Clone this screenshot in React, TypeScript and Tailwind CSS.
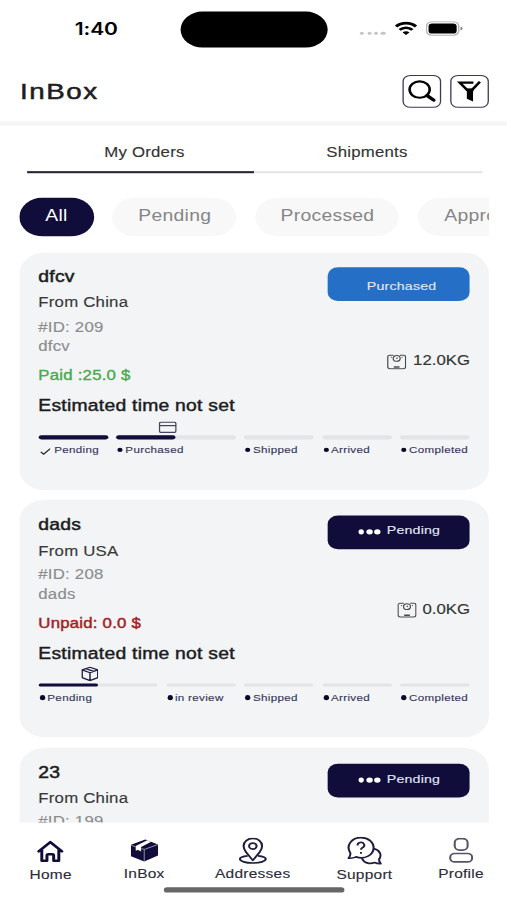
import React from "react";

const label = "whitespace-nowrap font-['Liberation_Sans',Arial,sans-serif]";

function StatusBar() {
  return (
    <div className="flex h-[56px] shrink-0 items-start">
      <div className="w-[139.5px] pt-[17.4px] pl-[58px] font-['Inter',sans-serif] text-[16.3px] leading-[20px] font-semibold tracking-[-0.1px] text-black">1:40</div>
      <div className="mt-[11px] h-[33.5px] w-[114.8px] rounded-full bg-black" />
      <div className="mt-[20px] ml-[25px] flex h-[14px] items-start">
        <div className="mt-[10px] flex gap-[2.2px]">
          {[0, 1, 2, 3].map((i) => (
            <span key={i} className="h-[3.4px] w-[3.2px] rounded-full bg-[#c4c4c4]" />
          ))}
        </div>
        <svg className="mt-[0.3px] ml-[7.8px] h-[13.5px] w-[17.5px]" viewBox="0 0 17.5 13.5" fill="none" stroke="#000" strokeWidth="2.5">
          <path d="M1 5.1A11 11 0 0 1 16.5 5.1" />
          <path d="M3.8 8.3A7 7 0 0 1 13.7 8.3" />
          <path d="M8.75 13.2L6.1 10.7A3.6 3.6 0 0 1 11.4 10.7Z" fill="#000" stroke="none" />
        </svg>
        <svg className="ml-[6px] h-[14px] w-[29px]" viewBox="0 0 29 14">
          <rect x="0.6" y="0.6" width="25" height="12.8" rx="4.2" fill="#fff" stroke="#b4b4b4" strokeWidth="1.1" />
          <rect x="2.2" y="2.2" width="21.8" height="9.6" rx="2.8" />
          <path d="M27 5.1Q28.6 5.6 28.6 7Q28.6 8.4 27 8.9Z" fill="#8a8a8a" />
        </svg>
      </div>
    </div>
  );
}

function Header() {
  const box = "flex h-[31.5px] w-[30px] items-center justify-center rounded-[6px] border border-[#3b3959]";
  return (
    <div className="flex h-[62.5px] shrink-0 items-start border-b-[4px] border-[#f4f5f6] pl-[15.5px]">
      <h1 className={`${label} mt-[19.2px] w-[296.8px] text-[21.5px] leading-[24px] tracking-[1.2px] text-[#1d1d22] [-webkit-text-stroke:0.5px]`}>InBox</h1>
      <div className="mt-[14.7px] flex gap-[6.8px]">
        <div className={box}>
          <svg className="h-[24px] w-[22px]" viewBox="0 0 22 24" fill="none" stroke="#000">
            <circle cx="9.3" cy="10.8" r="7.8" strokeWidth="2" />
            <path d="M15 16.4L20.2 20.8" strokeWidth="3" strokeLinecap="round" />
          </svg>
        </div>
        <div className={box}>
          <svg className="h-[24px] w-[22px]" viewBox="0 0 22 24" fill="none" stroke="#000">
            <path d="M14 4.2H3.4L9 11H13L19 3.4" strokeWidth="2.1" />
            <path d="M7.6 9.8H14.6L13.7 12.8V22L8.9 19.4V12.6Z" fill="#000" stroke="none" />
          </svg>
        </div>
      </div>
    </div>
  );
}

function Tabs() {
  const tab = `${label} flex-1 text-center text-[13px] leading-[16px] tracking-[0.18px] text-[#333] [-webkit-text-stroke:0.12px]`;
  return (
    <div className="ml-[20.7px] h-[68.5px] w-[353px] shrink-0 pt-[18.5px]">
      <div className="flex">
        <div className={`${tab} pl-[8px]`}><span className="-ml-[4px]">My Orders</span></div>
        <div className={`${tab} pr-[4px]`}>Shipments</div>
      </div>
      <div className="mt-[8.6px] flex h-[2.6px]">
        <div className="flex-1 bg-[#29263f]" />
        <div className="h-[2.2px] flex-1 bg-[#e4e5e6]" />
      </div>
    </div>
  );
}

function Chips() {
  const chip = `${label} h-[37px] shrink-0 rounded-full pt-[7.8px] text-center text-[15px] leading-[18px] tracking-[0.2px]`;
  return (
    <div className="ml-[15px] flex w-[364px] shrink-0 gap-[14.9px] overflow-hidden">
      <div className={`${chip} w-[57.6px] bg-[#100d3a] text-white`}>All</div>
      <div className={`${chip} w-[96px] bg-[#f8f8f9] text-[#858588]`}>Pending</div>
      <div className={`${chip} w-[111px] bg-[#f8f8f9] text-[#858588]`}>Processed</div>
      <div className={`${chip} w-[106px] bg-[#f8f8f9] text-[#858588]`}>Approved</div>
    </div>
  );
}

function ScaleIcon() {
  return (
    <svg className="h-[15px] w-[15px]" viewBox="0 0 15 15" fill="none" stroke="#4a4a4a" strokeWidth="0.95">
      <path d="M5 1.2H2.2Q0.6 1.2 0.6 2.8V12.2Q0.6 14 2.2 14H12.8Q14.4 14 14.4 12.2V2.8Q14.4 1.2 12.8 1.2H10" />
      <circle cx="7.5" cy="4.3" r="2.7" />
      <path d="M7.2 4.6L8.2 3.5M2.9 3.2H3.7M11.3 3.2H12.1" />
      <path d="M5.3 12.4H9.7" strokeWidth="1.4" />
    </svg>
  );
}

function CardIcon() {
  return (
    <svg className="h-[11px] w-[14px]" viewBox="0 0 14 11" fill="none" stroke="#46445e" strokeWidth="1.1">
      <rect x="0.6" y="0.6" width="12.8" height="9.8" rx="1.4" />
      <path d="M0.5 4H13.5" />
    </svg>
  );
}

function BoxIcon() {
  return (
    <svg className="h-[14px] w-[13.5px]" viewBox="0 0 13.5 14" fill="none" stroke="#211f42" strokeWidth="1.15" strokeLinejoin="round">
      <path d="M6.75 0.7L12.8 3.2V10.5L6.75 13.3L0.7 10.5V3.2ZM0.7 3.2L6.75 5.9L12.8 3.2M6.75 5.9V13.3M3.5 2L9.7 4.6" />
    </svg>
  );
}

interface Step {
  name: string;
  state: "done" | "current" | "todo";
}

interface Order {
  title: string;
  from: string;
  id: string;
  note: string;
  payment: string;
  paid: boolean;
  weight: string;
  status: "Purchased" | "Pending";
  steps: Step[];
}

function Track({ steps, icon }: { steps: Step[]; icon: React.ReactNode }) {
  return (
    <div className="flex gap-[6.5px]">
      {steps.map((s) => (
        <div key={s.name} className={s.state === "current" ? "w-[92.4px] shrink-0" : "w-[54px] shrink-0"}>
          <div className="flex h-[19px] w-[46.6px] items-end justify-end pb-[2.2px]">{s.state === "current" && icon}</div>
          <div className="h-[3.5px] rounded-full bg-[#e3e4e6]">
            {s.state === "done" && <div className="h-full rounded-full bg-[#100d3a]" />}
            {s.state === "current" && <div className="h-full w-1/2 rounded-full bg-[#100d3a]" />}
          </div>
          <div className="mt-[4.2px] flex h-[12px] items-center pl-[1px]">
            {s.state === "done" ? (
              <svg className="mt-[3px] mr-[2.8px] h-[7px] w-[8.5px] shrink-0" viewBox="0 0 8.5 7" fill="none" stroke="#222" strokeWidth="1">
                <path d="M0.6 3.8L2.8 6L8 0.7" />
              </svg>
            ) : (
              <span className="mr-[1.9px] h-[4.6px] w-[4.1px] shrink-0 rounded-full bg-[#0a0828]" />
            )}
            <span className={`${label} text-[9px] leading-[12px] tracking-[0.25px] text-[#37355a] [-webkit-text-stroke:0.12px]`}>{s.name}</span>
          </div>
        </div>
      ))}
    </div>
  );
}

function StatusBadge({ status }: { status: Order["status"] }) {
  const text = `${label} text-[11px] leading-[14px] tracking-[0.15px] text-[#e3e7f5] [-webkit-text-stroke:0.12px]`;
  if (status === "Purchased") {
    return (
      <div className="h-[32px] w-[110px] rounded-[8px] bg-[#256fc6] pt-[10.4px] pl-[30px]">
        <div className={text}>Purchased</div>
      </div>
    );
  }
  return (
    <div className="flex h-[32px] w-[110px] gap-[5px] rounded-[8px] bg-[#100d3a] pt-[7.3px] pl-[23.5px]">
      <div className="mt-[5.8px] flex gap-[1.6px]">
        {[0, 1, 2].map((i) => (
          <span key={i} className="h-[5px] w-[4.6px] rounded-full bg-white" />
        ))}
      </div>
      <div className={text}>Pending</div>
    </div>
  );
}

function OrderCard({ order }: { order: Order }) {
  return (
    <div className="h-[225px] shrink-0 rounded-[20px] bg-[#f2f4f5] px-[14.7px] pt-[14.5px]">
      <div className="flex h-[140px] justify-between">
        <div className={`${label} text-[13px] leading-[16px] tracking-[0.18px] [-webkit-text-stroke:0.12px]`}>
          <div className="text-[15px] leading-[17.4px] text-[#1c1c1e] [-webkit-text-stroke:0.45px]">{order.title}</div>
          <div className="mt-[8.3px] text-[#38383a]">{order.from}</div>
          <div className="mt-[6.8px] text-[#8b8c8e]">{order.id}</div>
          <div className="mt-[2.4px] text-[#8b8c8e]">{order.note}</div>
          <div className={order.paid ? "mt-[11.7px] text-[#46a94b] [-webkit-text-stroke:0.3px]" : "mt-[11.7px] text-[#a31f22] [-webkit-text-stroke:0.4px]"}>{order.payment}</div>
          <div className="mt-[11.7px] text-[15px] leading-[18px] text-[#1c1c1e] [-webkit-text-stroke:0.4px]">Estimated time not set</div>
        </div>
        <div className="flex flex-col items-end">
          <StatusBadge status={order.status} />
          <div className="mt-[49.2px] flex items-center gap-[4.8px]">
            <ScaleIcon />
            <span className={`${label} text-[13px] leading-[16px] text-[#333] [-webkit-text-stroke:0.12px]`}>{order.weight}</span>
          </div>
        </div>
      </div>
      <Track steps={order.steps} icon={order.status === "Pending" ? <BoxIcon /> : <CardIcon />} />
    </div>
  );
}

const orders: Order[] = [
  {
    title: "dfcv", from: "From China", id: "#ID: 209", note: "dfcv", payment: "Paid :25.0 $", paid: true, weight: "12.0KG", status: "Purchased",
    steps: [
      { name: "Pending", state: "done" },
      { name: "Purchased", state: "current" },
      { name: "Shipped", state: "todo" },
      { name: "Arrived", state: "todo" },
      { name: "Completed", state: "todo" },
    ],
  },
  {
    title: "dads", from: "From USA", id: "#ID: 208", note: "dads", payment: "Unpaid: 0.0 $", paid: false, weight: "0.0KG", status: "Pending",
    steps: [
      { name: "Pending", state: "current" },
      { name: "in review", state: "todo" },
      { name: "Shipped", state: "todo" },
      { name: "Arrived", state: "todo" },
      { name: "Completed", state: "todo" },
    ],
  },
];

function PartialCard() {
  return (
    <div className="flex min-h-0 flex-1 justify-between overflow-hidden rounded-t-[20px] bg-[#f2f4f5] px-[14.7px] pt-[14.5px]">
      <div className={`${label} text-[13px] leading-[16px] tracking-[0.18px] [-webkit-text-stroke:0.12px]`}>
        <div className="text-[15px] leading-[17.4px] text-[#1c1c1e] [-webkit-text-stroke:0.45px]">23</div>
        <div className="mt-[8.3px] text-[#38383a]">From China</div>
        <div className="mt-[6px] text-[#8b8c8e]">#ID: 199</div>
      </div>
      <StatusBadge status="Pending" />
    </div>
  );
}

function HomeIcon() {
  return (
    <svg className="h-[22px] w-[22px]" viewBox="0 0 22 22" fill="none" stroke="#100d3a" strokeWidth="2.3" strokeLinejoin="round" strokeLinecap="round">
      <path d="M2 11L11 2.2L20 11M4.4 9.4V19.8H8.4V15Q8.4 13.8 9.6 13.8H12.4Q13.6 13.8 13.6 15V19.8H17.6V9.4" />
    </svg>
  );
}

function InboxIcon() {
  return (
    <svg className="h-[22px] w-[22px]" viewBox="0 0 22 22">
      <path d="M0.5 5.8L11.6 0.8L21.5 5.4V16L10.8 21.5L0.5 16.6Z" fill="#100d3a" />
      <path d="M13.2 1.5L16.2 2.9L8.4 7.8V12L6.3 10.6L4.2 11.2V6.9Z" fill="#fff" />
      <path d="M8.6 9.2L10.8 10.2L21.2 5.6M10.8 10.2V21M0.6 6L4.2 7.8" fill="none" stroke="#c9c9da" strokeWidth="0.6" />
    </svg>
  );
}

function PinIcon() {
  return (
    <svg className="h-[25px] w-[22px]" viewBox="0 0 22 25" fill="none" stroke="#1f1d40" strokeWidth="1.6">
      <path d="M11 21.5L5.8 13.8Q3.8 10.4 3.8 7.9A7.2 7.2 0 0 1 18.2 7.9Q18.2 10.4 16.2 13.8Z" strokeLinejoin="round" />
      <circle cx="11" cy="8" r="2.9" />
      <path d="M7 17.3C3 17.8 1 18.9 1 20.3C1 22.4 5.4 24 11 24S21 22.4 21 20.3C21 18.9 19 17.8 15 17.3" />
    </svg>
  );
}

function SupportIcon() {
  return (
    <svg className="h-[27px] w-[27px]" viewBox="0 0 27 27" fill="none" stroke="#1f1d40" strokeWidth="1.6" strokeLinejoin="round">
      <path d="M2.6 15.6C-1.4 8 4 1 10.8 1C16.6 1 20.6 5.4 20.6 10.6C20.6 17.4 13.8 22 7 19.2Q4.2 20.8 1.2 20.4Q2.8 18.6 2.6 15.6Z" />
      <path d="M20.6 11.4C25.4 12.6 27.4 17.6 24.8 21.4Q24.8 24 26.2 25.6Q23.4 25.8 21.4 24.6C17.4 26.6 13 24.8 11.6 20.4" />
      <path d="M8.2 8.4A2.6 2.6 0 1 1 12.2 10.3Q10.8 11.1 10.8 12.5M10.8 14.6V16.2" strokeWidth="1.5" />
    </svg>
  );
}

function ProfileIcon() {
  return (
    <svg className="h-[24px] w-[19px]" viewBox="0 0 19 24" fill="none" stroke="#55536a" strokeWidth="1.6">
      <rect x="4.5" y="1" width="10" height="10.8" rx="3.8" />
      <rect x="1" y="15" width="17" height="8" rx="3.6" />
    </svg>
  );
}

function NavBar() {
  const text = `${label} text-[12px] leading-[14px] tracking-[0.2px] text-[#2c2b3a] [-webkit-text-stroke:0.12px]`;
  const item = "flex shrink-0 flex-col items-center";
  return (
    <div className="h-[73px] shrink-0 overflow-hidden bg-white">
      <div className="flex h-[60px]">
        <div className={`${item} w-[78.5px] pt-[15.5px]`}><HomeIcon /><span className={`${text} mt-[4.2px]`}>Home</span></div>
        <div className={`${item} w-[66.5px] pt-[15px]`}><InboxIcon /><span className={`${text} mt-[4.2px]`}>InBox</span></div>
        <div className={`${item} w-[101.8px] pt-[14px]`}><PinIcon /><span className={`${text} mt-[2.4px]`}>Addresses</span></div>
        <div className={`${item} w-[71.4px] pt-[13.3px]`}><SupportIcon /><span className={`${text} mt-[1.7px]`}>Support</span></div>
        <div className={`${item} w-[78.4px] pt-[14.3px]`}><ProfileIcon /><span className={`${text} mt-[3.1px]`}>Profile</span></div>
      </div>
      <div className="mt-[1.2px] ml-[126.7px] h-[5px] w-[140.3px] rounded-full bg-[#666]" />
    </div>
  );
}

export default function App() {
  return (
    <div className="h-[900px] w-[507px] overflow-hidden bg-white">
      <div className="flex h-[852px] w-[393px] origin-top-left scale-x-[1.29] scale-y-[1.0563] flex-col bg-white">
        <StatusBar />
        <Header />
        <Tabs />
        <Chips />
        <div className="mt-[14.7px] ml-[15px] flex min-h-0 w-[364px] flex-1 flex-col gap-[9.8px] overflow-hidden">
          {orders.map((o) => (
            <OrderCard key={o.id} order={o} />
          ))}
          <PartialCard />
        </div>
        <NavBar />
      </div>
    </div>
  );
}
